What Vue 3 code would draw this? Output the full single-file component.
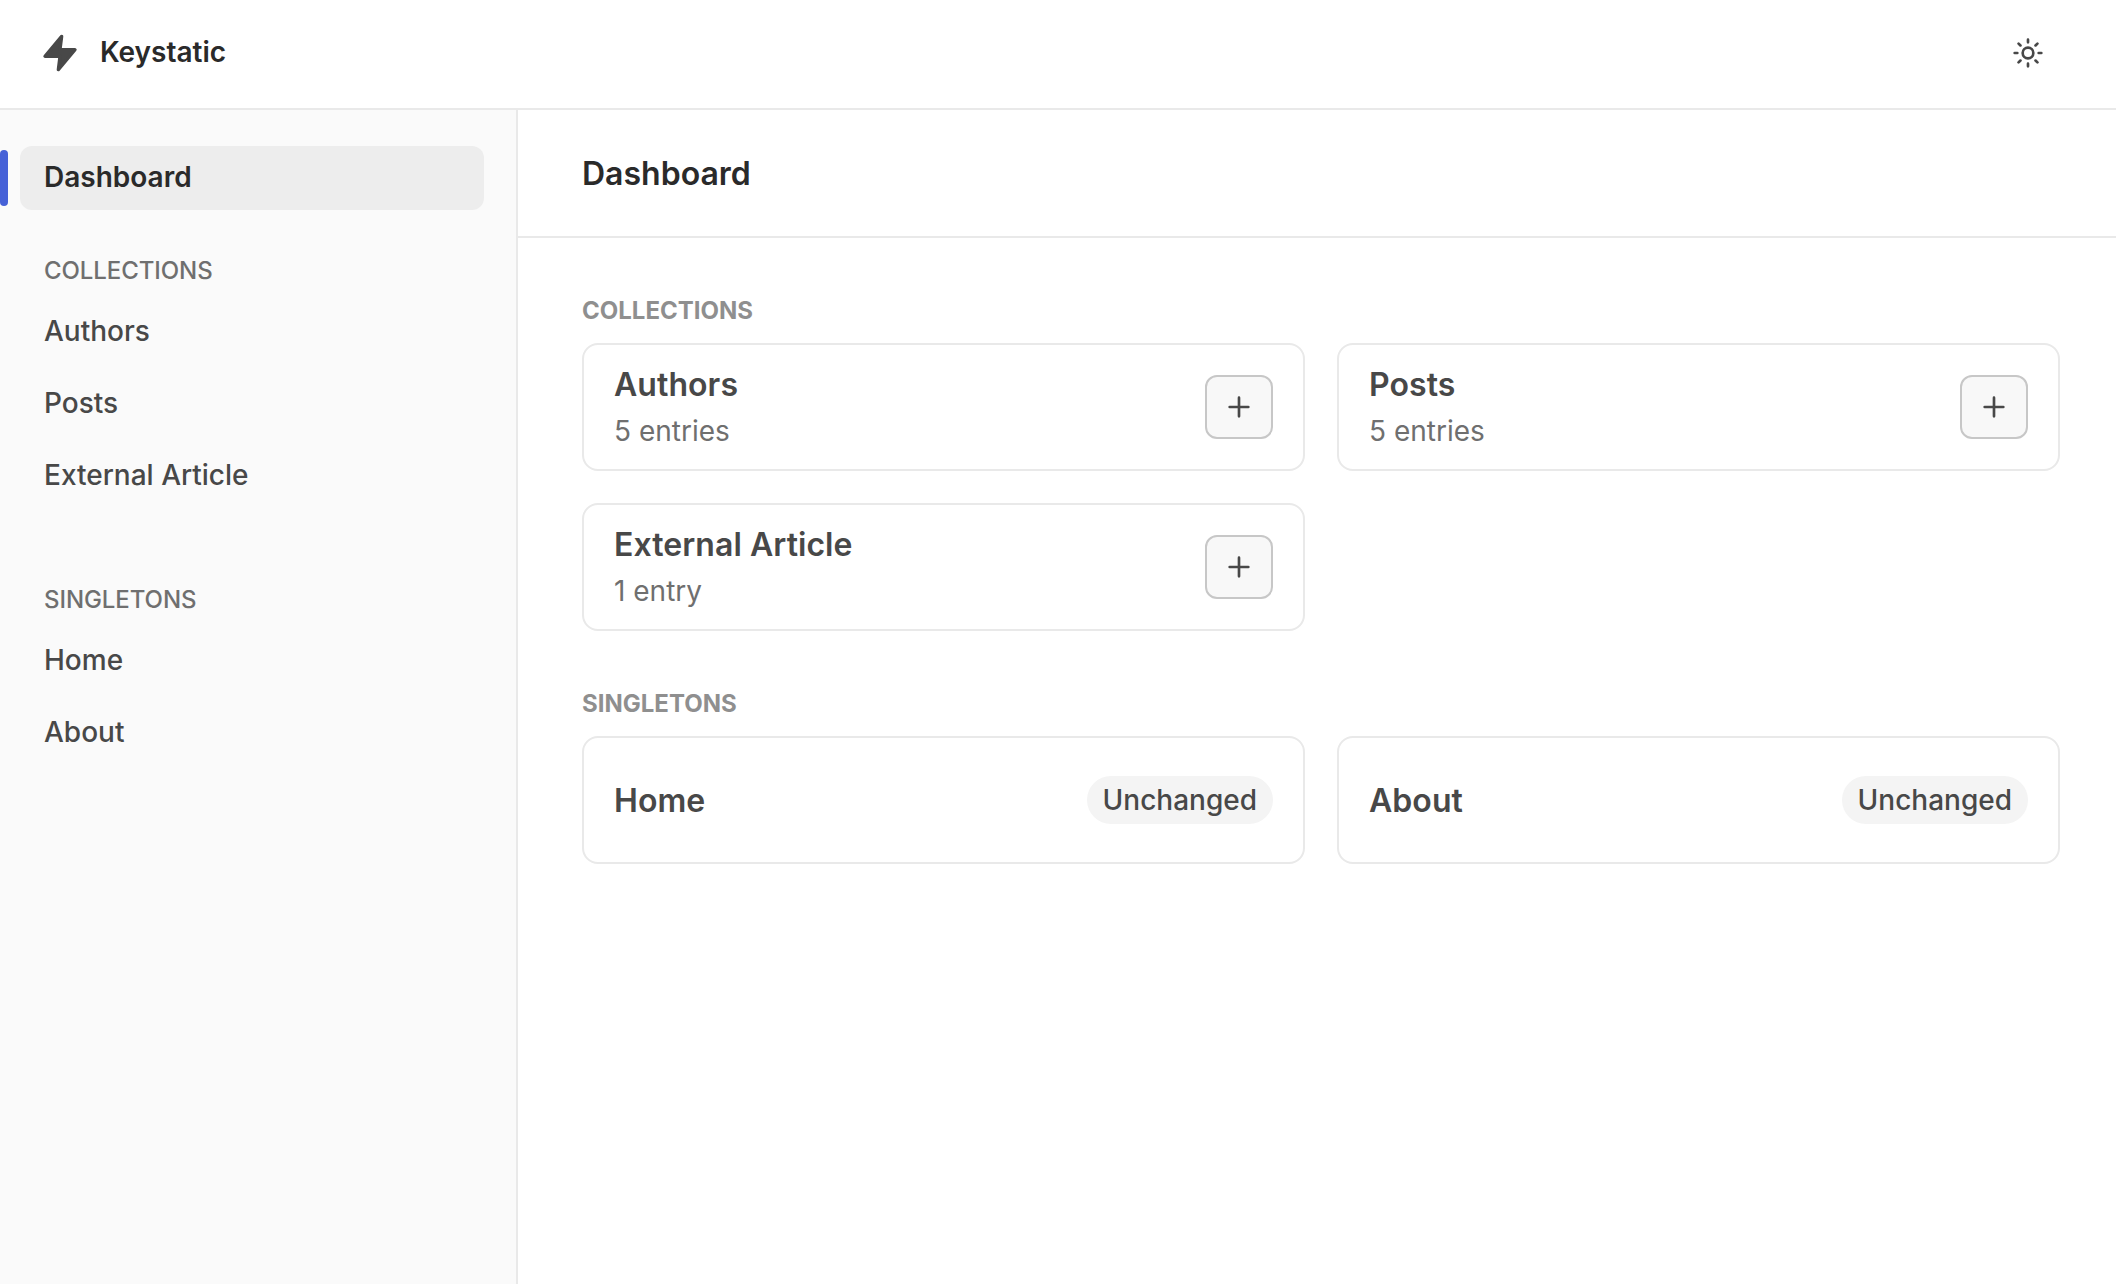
<script setup>
const navSections = [
  { title: 'Collections', items: ['Authors', 'Posts', 'External Article'] },
  { title: 'Singletons', items: ['Home', 'About'] },
]

const collections = [
  { name: 'Authors', count: '5 entries' },
  { name: 'Posts', count: '5 entries' },
  { name: 'External Article', count: '1 entry' },
]

const singletons = [
  { name: 'Home', status: 'Unchanged' },
  { name: 'About', status: 'Unchanged' },
]
</script>

<template>
  <div class="app">
    <header class="topbar">
      <div class="brand">
        <svg class="brand-icon" viewBox="0 0 24 24" aria-hidden="true">
          <polygon points="13 2 3 14 12 14 11 22 21 10 12 10 13 2" />
        </svg>
        <span class="brand-name">Keystatic</span>
      </div>
      <button class="theme" aria-label="Theme">
        <svg class="icon" viewBox="0 0 24 24" aria-hidden="true">
          <circle cx="12" cy="12" r="4" />
          <path
            d="M12 2v2M12 20v2M4.93 4.93l1.41 1.41M17.66 17.66l1.41 1.41M2 12h2M20 12h2M6.34 17.66l-1.41 1.41M19.07 4.93l-1.41 1.41"
          />
        </svg>
      </button>
    </header>

    <div class="body">
      <nav class="sidebar">
        <a class="nav-item current">Dashboard</a>
        <section v-for="section in navSections" :key="section.title" class="nav-section">
          <h3 class="nav-title">{{ section.title }}</h3>
          <a v-for="item in section.items" :key="item" class="nav-item">{{ item }}</a>
        </section>
      </nav>

      <main class="main">
        <div class="page-header">
          <h1>Dashboard</h1>
        </div>
        <div class="content">
          <section class="group">
            <h2 class="group-title">Collections</h2>
            <div class="grid">
              <article v-for="c in collections" :key="c.name" class="card">
                <div class="card-text">
                  <span class="card-name">{{ c.name }}</span>
                  <span class="card-count">{{ c.count }}</span>
                </div>
                <button class="add" aria-label="Add">
                  <svg class="icon" viewBox="0 0 24 24" aria-hidden="true">
                    <path d="M12 5v14M5 12h14" />
                  </svg>
                </button>
              </article>
            </div>
          </section>
          <section class="group">
            <h2 class="group-title">Singletons</h2>
            <div class="grid">
              <article v-for="s in singletons" :key="s.name" class="card">
                <span class="card-name">{{ s.name }}</span>
                <span class="badge">{{ s.status }}</span>
              </article>
            </div>
          </section>
        </div>
      </main>
    </div>
  </div>
</template>

<style>
body {
  margin: 0;
  background: #fff;
}
</style>

<style scoped>
.app {
  display: flex;
  flex-direction: column;
  height: 100vh;
  box-sizing: border-box;
  font-family: Inter, 'Liberation Sans', sans-serif;
  font-size: 28px;
  color: #484848;
  background: #fff;
  -webkit-font-smoothing: antialiased;
}
h1,
h2,
h3 {
  margin: 0;
}
button {
  display: flex;
  align-items: center;
  justify-content: center;
  box-sizing: border-box;
  padding: 0;
  color: inherit;
}
.icon {
  width: 32px;
  height: 32px;
  fill: none;
  stroke: currentColor;
  stroke-width: 2;
  stroke-linecap: round;
  stroke-linejoin: round;
}
.topbar {
  display: flex;
  flex: none;
  align-items: center;
  justify-content: space-between;
  height: 106px;
  padding: 0 56px 2px 40px;
  border-bottom: 2px solid #e9e9e9;
}
.brand {
  display: flex;
  align-items: center;
  gap: 20px;
  font-weight: 600;
  line-height: 40px;
  color: #2a2a2a;
}
.brand-name {
  padding-bottom: 2px;
}
.brand-icon {
  width: 40px;
  height: 40px;
  fill: #484848;
  stroke: #484848;
  stroke-width: 2;
  stroke-linejoin: round;
}
.theme {
  width: 64px;
  height: 64px;
  border: 0;
  background: none;
}
.body {
  display: flex;
  flex: 1;
  min-height: 0;
}
.sidebar {
  flex: none;
  box-sizing: border-box;
  width: 518px;
  padding: 36px 32px 0 20px;
  border-right: 2px solid #e9e9e9;
  background: #fafafa;
}
.nav-item {
  display: flex;
  align-items: center;
  box-sizing: border-box;
  height: 64px;
  margin-bottom: 8px;
  padding: 0 24px 2px;
  border-radius: 12px;
  font-weight: 500;
}
.nav-item.current {
  position: relative;
  margin-bottom: 41px;
  font-weight: 600;
  color: #2a2a2a;
  background: #ededed;
}
.nav-item.current::before {
  content: '';
  position: absolute;
  top: 4px;
  left: -20px;
  width: 8px;
  height: 56px;
  border-radius: 4px;
  background: #4661d7;
}
.nav-section + .nav-section {
  margin-top: 72px;
}
.nav-title {
  height: 40px;
  margin-bottom: 9px;
  padding: 0 24px;
  font-size: 24px;
  font-weight: 500;
  line-height: 40px;
  letter-spacing: -0.08px;
  text-transform: uppercase;
  color: #6f6f6f;
}
.main {
  flex: 1;
  min-width: 0;
}
.page-header {
  display: flex;
  align-items: center;
  box-sizing: border-box;
  height: 128px;
  padding: 2px 64px 0;
  border-bottom: 2px solid #e9e9e9;
}
h1 {
  font-size: 32px;
  font-weight: 600;
  line-height: 40px;
  color: #2a2a2a;
}
.content {
  display: flex;
  flex-direction: column;
  gap: 56px;
  padding: 56px 56px 0 64px;
}
.group-title {
  height: 34px;
  margin-bottom: 15px;
  font-size: 24px;
  font-weight: 700;
  line-height: 34px;
  text-transform: uppercase;
  color: #8f8f8f;
}
.grid {
  display: grid;
  grid-template-columns: 1fr 1fr;
  gap: 32px;
}
.card {
  display: flex;
  align-items: center;
  justify-content: space-between;
  box-sizing: border-box;
  height: 128px;
  padding: 0 30px;
  border: 2px solid #e9e9e9;
  border-radius: 16px;
}
.card-text {
  display: flex;
  flex-direction: column;
  gap: 9px;
}
.card-name {
  padding-top: 1px;
  font-size: 32px;
  font-weight: 600;
  line-height: 38px;
  letter-spacing: 0.06px;
}
.card-count {
  line-height: 36px;
  color: #6f6f6f;
}
.add {
  width: 68px;
  height: 64px;
  border: 2px solid #c7c7c7;
  border-radius: 12px;
  background: #f8f8f8;
}
.badge {
  height: 48px;
  padding: 0 16px;
  border-radius: 24px;
  font-weight: 500;
  line-height: 48px;
  background: #f4f4f4;
}
</style>
